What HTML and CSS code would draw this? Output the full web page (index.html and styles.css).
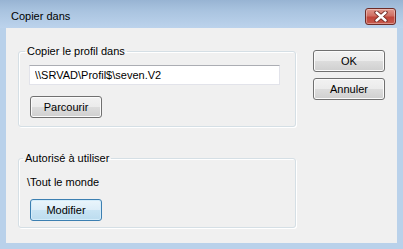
FILE: index.html
```html
<!DOCTYPE html>
<html lang="fr">
<head>
    <meta charset="UTF-8">
    <title>Copier dans</title>
    <link rel="stylesheet" href="styles.css">
</head>
<body>
    <div class="window">
        <div class="titlebar">
            <span class="title">Copier dans</span>
            <button class="close-button" aria-label="Fermer">
                <svg width="14" height="11" viewBox="0 0 14 11">
                    <path d="M2.5 1.5 L11.5 9.5 M11.5 1.5 L2.5 9.5" stroke="#6b2620" stroke-width="4.2" stroke-linecap="round"/>
                    <path d="M2.5 1.5 L11.5 9.5 M11.5 1.5 L2.5 9.5" stroke="#fff" stroke-width="2.4" stroke-linecap="round"/>
                </svg>
            </button>
        </div>

        <div class="client">
            <div class="groups">
                <fieldset class="group group-profile">
                    <legend>Copier le profil dans</legend>
                    <input class="path-input" type="text" value="\\SRVAD\Profil$\seven.V2">
                    <button class="push-button">Parcourir</button>
                </fieldset>

                <fieldset class="group group-users">
                    <legend>Autorisé à utiliser</legend>
                    <div class="user-name">\Tout le monde</div>
                    <button class="push-button default-button">Modifier</button>
                </fieldset>
            </div>

            <div class="actions">
                <button class="push-button">OK</button>
                <button class="push-button">Annuler</button>
            </div>
        </div>
    </div>
</body>
</html>
```

FILE: styles.css
```css
body {
    margin: 0;
    padding: 0;
    font-family: "Liberation Sans", Arial, sans-serif;
    font-size: 11px;
    color: #000;
}
.window {
    width: 403px;
    height: 249px;
    background-color: #b9d1ea;
    display: flex;
    flex-direction: column;
}
.titlebar {
    height: 28px;
    display: flex;
    align-items: flex-start;
    justify-content: space-between;
    background: linear-gradient(#98b4d3 0%, #aac4e0 40%, #bcd3ec 100%);
}
.title {
    margin: 9px 0 0 11px;
    line-height: 14px;
    color: #000;
}
.close-button {
    margin: 8px 7px 0 0;
    width: 31px;
    height: 17px;
    padding: 0;
    border: 1px solid #6e2c27;
    border-radius: 3px;
    background: linear-gradient(#e0998e 0%, #cf6f63 45%, #c0453a 55%, #c75a4d 100%);
    box-shadow: inset 0 0 0 1px rgba(255, 255, 255, 0.35);
    display: flex;
    align-items: center;
    justify-content: center;
}
.close-button svg {
    display: block;
}
.client {
    flex: 1;
    margin: 0 6px 6px 6px;
    background-color: #f0f0f0;
    padding: 16px 12px 0 12px;
    display: flex;
    justify-content: space-between;
}
.groups {
    width: 278px;
    display: flex;
    flex-direction: column;
}
.group {
    margin: 0;
    border: 1px solid #d5dfe5;
    border-radius: 3px;
    box-shadow: inset 1px 1px 0 #fff, 1px 1px 0 #fff;
    display: flex;
    flex-direction: column;
    align-items: flex-start;
}
.group legend {
    margin-left: -4px;
    padding: 0 2px;
    line-height: 14px;
}
.group-profile {
    padding: 7px 10px 8px 10px;
}
.group-users {
    margin-top: 24px;
    padding: 10px 10px 6px 8px;
}
.path-input {
    width: 251px;
    height: 20px;
    box-sizing: border-box;
    margin: 0;
    padding: 0 5px;
    font-family: inherit;
    font-size: 11px;
    color: #000;
    background-color: #fff;
    border: 1px solid #e2e3ea;
    border-top-color: #abadb3;
    outline: none;
}
.group-profile .push-button {
    margin-top: 11px;
    margin-left: 1px;
}
.user-name {
    line-height: 14px;
}
.group-users .push-button {
    margin-top: 10px;
    margin-left: 3px;
}
.push-button {
    width: 72px;
    height: 22px;
    padding: 0;
    font-family: inherit;
    font-size: 11px;
    color: #000;
    border: 1px solid #707070;
    border-radius: 3px;
    background: linear-gradient(#f2f2f2 0%, #ebebeb 50%, #dddddd 50%, #cfcfcf 100%);
    box-shadow: inset 0 0 0 1px #fbfbfb;
}
.default-button {
    border-color: #3c7fb1;
    background: linear-gradient(#eaf5fb 0%, #dcedf8 50%, #c9e4f4 50%, #bcdcef 100%);
    box-shadow: inset 0 0 0 1px #d4ecfa;
}
.actions {
    padding-top: 6px;
    display: flex;
    flex-direction: column;
    gap: 6px;
}
```
